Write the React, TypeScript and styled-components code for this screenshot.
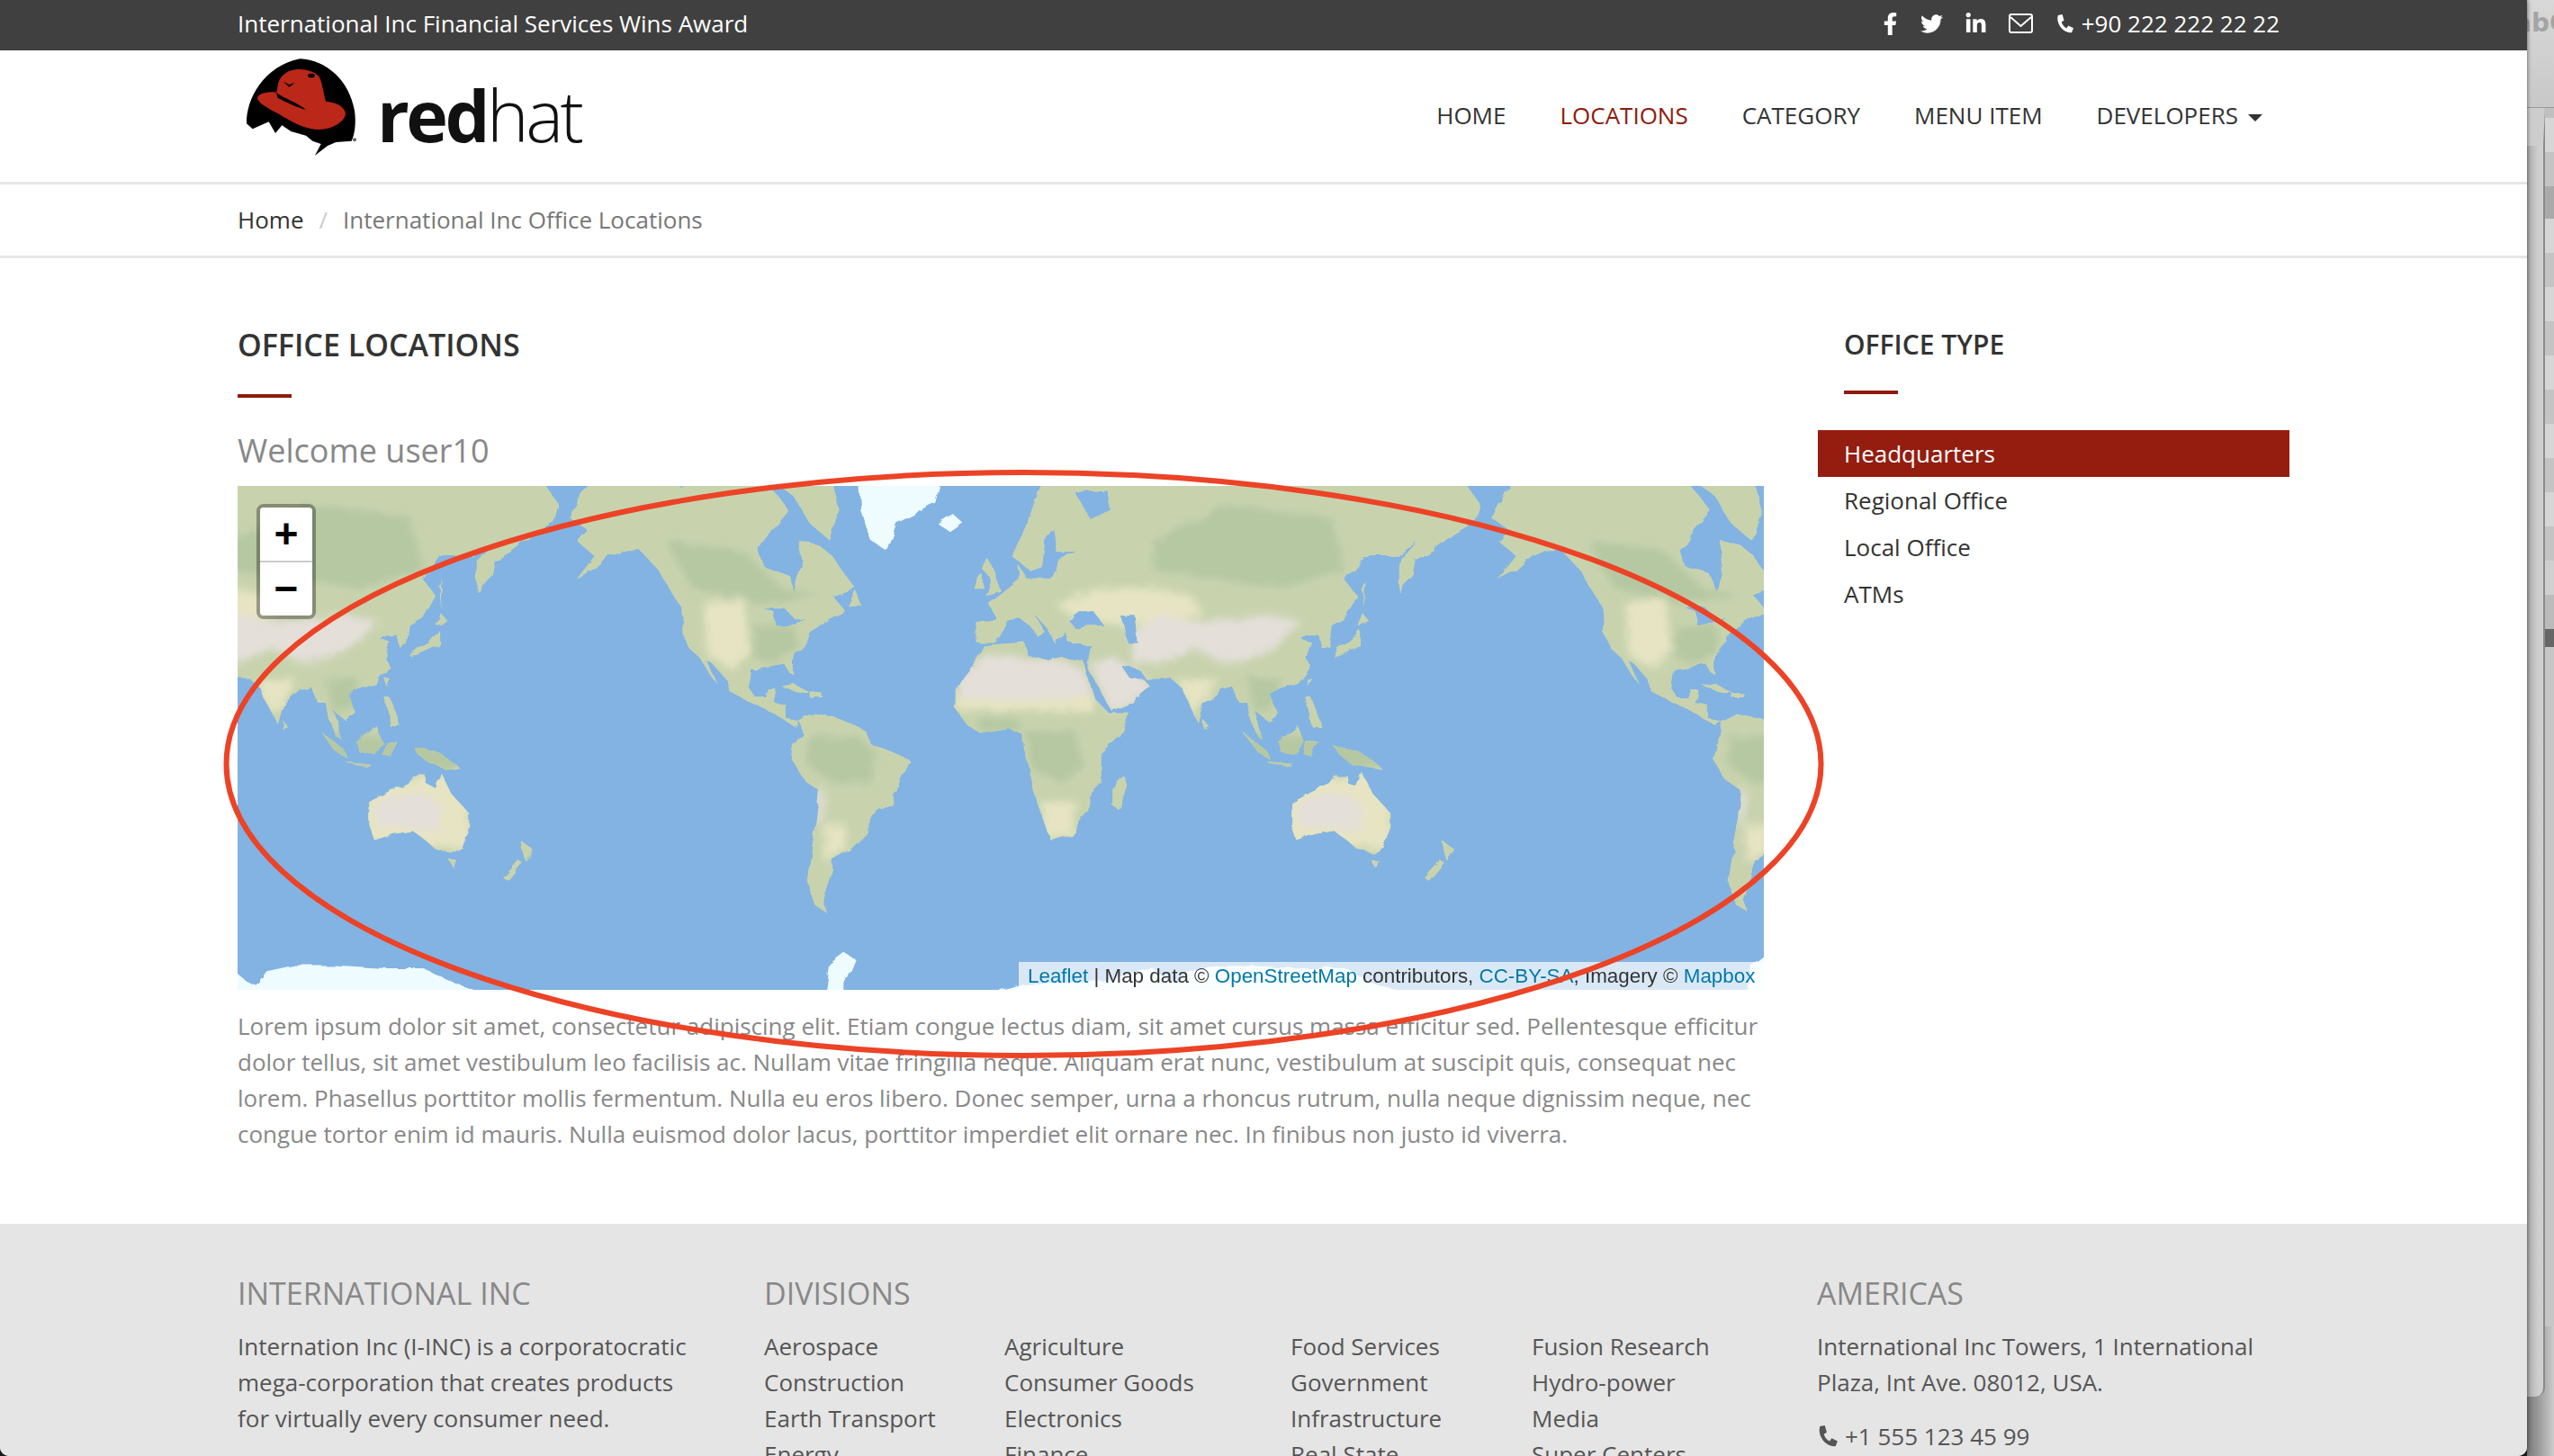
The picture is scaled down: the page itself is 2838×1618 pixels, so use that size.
import React from 'react';
import styled, { createGlobalStyle } from 'styled-components';
import { FaFacebookF, FaTwitter, FaLinkedinIn } from 'react-icons/fa';

const Global = createGlobalStyle`
  html, body { margin: 0; padding: 0; height: 1618px; overflow: hidden; background: #1d1d1d; }
  * { box-sizing: border-box; }
  body { font-family: "Open Sans", "Liberation Sans", sans-serif; font-size: 26px; line-height: 40px; color: #888; }
`;

const Screen = styled.div`display: flex; width: 2838px; height: 1618px; overflow: hidden;`;
const Window = styled.div`
  position: relative; width: 2808px; height: 1618px; flex: none; display: flex; flex-direction: column;
  background: #fff; overflow: hidden; border-radius: 0 0 10px 10px; box-shadow: 0 0 5px rgba(0,0,0,.6); z-index: 2;
`;
const TopBar = styled.div`
  height: 56px; flex: none; background: #404040; color: #fff; padding: 0 275px 4px 264px;
  display: flex; justify-content: space-between; align-items: center;
`;
const Social = styled.div`display: flex; align-items: center; gap: 24px; svg { display: block; }`;
const FacebookGlyph = styled(FaFacebookF)`margin-right: -3px;`;
const Phone = styled.span`display: flex; align-items: center; gap: 8px; margin-left: 1px;`;
const Envelope = styled.svg`width: 27px; height: 22px; flex: none;`;
const Handset = styled.svg<{ $size: number }>`width: ${p => p.$size}px; height: ${p => p.$size}px; flex: none;`;
const Header = styled.header`
  height: 149px; flex: none; border-bottom: 3px solid #e6e6e6; padding: 0 264px;
  display: flex; justify-content: space-between; align-items: center;
`;
const Logo = styled.div`display: flex; align-items: flex-start; height: 146px; margin-left: -4px;`;
const HatSvg = styled.svg`width: 150px; height: 120px; margin-top: 4px; flex: none;`;
const LogoType = styled.div`
  font-size: 79px; line-height: 100px; margin: 22px 0 0 9px; color: #111; letter-spacing: -3.5px; font-weight: 300;
  b { font-weight: 700; }
`;
const Nav = styled.nav`display: flex; padding-bottom: 2px;`;
const NavItem = styled.a<{ $active?: boolean }>`
  padding: 0 30px; color: ${p => (p.$active ? '#8f1a0e' : '#333')}; display: flex; align-items: center; gap: 11px; white-space: nowrap;
`;
const Caret = styled.i`
  display: block; width: 0; height: 0; margin-top: 6px; border-left: 8px solid transparent; border-right: 8px solid transparent; border-top: 8px solid #333;
`;
const Crumbs = styled.div`
  height: 82px; flex: none; border-bottom: 3px solid #e6e6e6; padding: 0 264px 2px; display: flex; align-items: center; gap: 17px; color: #777;
  a { color: #333; }
  span { color: #ccc; }
`;
const Main = styled.main`
  flex: none; height: 1073px; padding: 76px 264px 0; display: grid; grid-template-columns: 1696px 524px; column-gap: 60px;
`;
const Title = styled.h2`
  margin: 0; font-size: 34px; line-height: 40px; font-weight: 600; color: #333;
`;
const SideTitle = styled(Title)`font-size: 30px; padding-left: 29px;`;
const Rule = styled.div<{ $side?: boolean }>`
  width: 60px; height: 4px; background: #8f1a0e; margin: ${p => (p.$side ? '31px 0 40px 29px' : '35px 0 0')};
`;
const Welcome = styled.h3`
  margin: 31px 0 1px; font-size: 36px; line-height: 56px; font-weight: 400; color: #888; height: 66px;
`;
const MapBox = styled.div`position: relative; width: 1696px; height: 560px; background: #82b3e2; overflow: hidden;`;
const MapSvg = styled.svg`display: block; width: 1696px; height: 560px;`;
const Zoom = styled.div`
  position: absolute; left: 21px; top: 20px; width: 66px; height: 128px; border: 4px solid rgba(0,0,0,.33); border-radius: 8px;
  background-clip: padding-box; overflow: hidden;
`;
const ZoomBtn = styled.div<{ $first?: boolean }>`
  background: #fff; color: #000; display: flex; align-items: center; justify-content: center;
  font: 700 46px/56px "Liberation Mono", monospace;
  height: ${p => (p.$first ? 61 : 60)}px;
  padding-top: ${p => (p.$first ? 7 : 5)}px;
  border-bottom: ${p => (p.$first ? '2px solid #ccc' : 'none')};
`;
const Attribution = styled.div`
  position: absolute; right: 0; bottom: 0; height: 31px; width: 828px; padding: 0 10px; background: rgba(255,255,255,.7);
  font: 22.4px/31px "Liberation Sans", Arial, sans-serif; color: #333; white-space: nowrap; text-align: right;
  a { color: #0078a8; }
`;
const Lorem = styled.p`margin: 20px 0 0; color: #888; width: 1696px;`;
const SideList = styled.ul`margin: 0; padding: 0; list-style: none;`;
const SideItem = styled.li<{ $active?: boolean }>`
  height: 52px; line-height: 52px; padding-left: 29px; color: ${p => (p.$active ? '#fff' : '#333')};
  background: ${p => (p.$active ? '#941d10' : 'transparent')}; font-weight: ${p => (p.$active ? 500 : 400)};
`;
const Footer = styled.footer`
  flex: 1; background: #e5e5e5; padding: 55px 264px 0; display: grid; grid-template-columns: 585px 1170px 524px; color: #555; overflow: hidden;
`;
const FootTitle = styled.h4`margin: 0 0 17px; font-size: 34px; line-height: 44px; font-weight: 400; color: #888;`;
const Divisions = styled.div`display: grid; grid-template-columns: 267px 318px 268px 1fr;`;
const Plain = styled.div`white-space: nowrap;`;
const FootPhone = styled.div`display: flex; align-items: center; gap: 7px; margin-top: 20px;`;

const Strip = styled.div`width: 30px; height: 1618px; flex: none; position: relative; background: linear-gradient(90deg, #777, #ccc); overflow: hidden;`;
const StripHead = styled.div`
  height: 120px; background: linear-gradient(#d8d8d8, #c8c8c8); border-bottom: 1px solid #999; color: #a4a4a4;
  font: 700 28px/52px "DejaVu Sans", sans-serif; white-space: nowrap; overflow: hidden; text-indent: -14px;
`;
const StripBody = styled.div`display: flex; height: 1498px; align-items: flex-start;`;
const StripPanel = styled.div`
  width: 20px; height: 1432px; background: linear-gradient(90deg, #aaa, #cfcfcf 70%); border-right: 2px solid #8a8a8a;
  border-bottom-right-radius: 10px; border-top: 42px solid #cdcdcd;
`;
const StripRows = styled.div`width: 10px; height: 1354px; background: #c6c6c6;`;
const StripRow = styled.div<{ $tone: string; $h: number }>`height: ${p => p.$h}px; background: ${p => p.$tone};`;

const proj = ([lon, lat]: number[]) => {
  const y = 512 - (1024 / (2 * Math.PI)) * Math.log(Math.tan(Math.PI / 4 + (lat * Math.PI) / 360));
  return `${((lon + 180) / 360) * 1024},${y}`;
};
const d = (pts: number[][]) => 'M' + pts.map(proj).join('L') + 'Z';

const land: number[][][] = [
  [[-168,66],[-162,70],[-156,72],[-141,72],[-128,72],[-115,72],[-108,72],[-95,72],[-94,72],[-86,69],[-82,67],[-88,64],[-94,60],[-92,57],[-82,55],[-80,51],[-79,54],[-77,57],[-78,62],[-70,61],[-65,59],[-60,55],[-56,52],[-65,50],[-60,46],[-66,44],[-70,42],[-74,40],[-76,36],[-81,31],[-80,26],[-82,27],[-84,30],[-90,29],[-97,28],[-98,22],[-95,18],[-91,18],[-90,21],[-87,21],[-88,16],[-83,15],[-83,10],[-78,9],[-80,7],[-85,10],[-92,14],[-97,16],[-105,20],[-106,24],[-112,30],[-114,31],[-110,23],[-112,25],[-117,32],[-121,35],[-124,40],[-124,47],[-128,51],[-133,56],[-140,60],[-148,60],[-152,59],[-158,56],[-165,54],[-158,59],[-165,62],[-161,64]],
  [[-92,76],[-70,76],[-62,67],[-66,62],[-74,65],[-80,69],[-88,71],[-92,72]],
  [[-112,78],[-92,78],[-92,74.5],[-112,74.5]],
  [[-85,22],[-80,23],[-74,20],[-78,20]],
  [[-74,20],[-69,19.5],[-69,18],[-74,18]],
  [[-59,47.5],[-53,47],[-56,51.5]],
  [[-78,9],[-72,12],[-62,10],[-52,5],[-50,0],[-44,-2],[-35,-6],[-39,-15],[-41,-22],[-48,-26],[-53,-34],[-58,-38],[-65,-41],[-66,-46],[-69,-52],[-67,-55],[-72,-53],[-75,-47],[-73,-37],[-71,-28],[-70,-18],[-76,-14],[-81,-6],[-80,0],[-77,4]],
  [[-6,36],[10,37],[11,33],[20,31],[25,32],[33,31],[35,24],[37,18],[43,12],[51,12],[47,3],[40,-4],[40,-15],[35,-20],[35,-25],[28,-33],[20,-35],[18,-30],[14,-20],[12,-10],[9,-1],[9,4],[4,6],[-7,4],[-13,8],[-17,14],[-17,21],[-10,29]],
  [[49,-12],[50,-16],[47,-25],[44,-23],[44,-17]],
  [[-9,37],[-9,43],[-1,44],[-4,48],[2,51],[8,54],[8,57],[11,54],[20,54],[24,59],[30,60],[22,60],[21,64],[24,66],[18,62],[17,57],[12,56],[5,59],[10,64],[18,72],[28,73],[40,73],[55,73],[68,73],[73,73],[80,74],[100,76],[113,74],[130,73],[150,73],[170,73],[180,72],[188,68],[186,65],[178,63],[170,60],[163,58],[162,55],[156,51],[156,58],[163,62],[155,59],[142,59],[135,54],[140,50],[135,44],[130,42],[129,36],[126,35],[125,39],[121,39],[118,38],[122,37],[120,32],[122,29],[117,23],[110,21],[106,19],[109,12],[105,9],[100,13],[103,2],[101,3],[98,10],[97,16],[94,16],[91,22],[87,21],[80,15],[78,8],[73,18],[72,21],[67,25],[57,25],[56,27],[50,30],[48,29],[51,25],[56,25],[59,22],[52,16],[44,13],[39,21],[35,28],[35,32],[36,36],[30,36],[27,37],[26,40],[23,38],[22,36.5],[19,41],[14,45],[18,40],[16,38],[12,42],[8,44],[3,43],[0,39],[-2,37]],
  [[-5,50],[1,51],[-2,56],[-4,58.5],[-6,56],[-3,54]],
  [[-10,52],[-6,52],[-6,55],[-9,54]],
  [[130,32],[136,34],[141,36],[141,41],[137,37],[132,35]],
  [[140,42],[145,43],[142,45.5]],
  [[142,46],[143,54],[142,52]],
  [[120,18],[122,18],[124,13],[126,7],[122,7],[121,13]],
  [[109,1],[117,7],[119,1],[116,-4],[110,-3]],
  [[95,5],[104,-2],[106,-6],[101,-3]],
  [[105,-7],[115,-8],[114,-8.8],[106,-7.8]],
  [[120,1],[125,1],[122,-5],[119,-4]],
  [[131,-1],[141,-3],[148,-8],[150,-10],[143,-9],[138,-8],[133,-4]],
  [[120,25],[122,25],[120.5,22]],
  [[80,9.5],[82,7],[80,6]],
  [[114,-22],[122,-18],[129,-15],[131,-12],[136,-12],[136,-15],[140,-17],[142,-11],[146,-19],[153,-26],[153,-31],[150,-37],[146,-39],[140,-38],[136,-35],[131,-32],[124,-33],[116,-35],[114,-30]],
  [[145,-41],[148,-41],[147,-43.5]],
  [[173,-35],[178,-38],[175,-41.5],[174,-39]],
  [[172,-41],[174,-42],[168,-47],[166,-46]],
];
const ice: number[][][] = [
  [[-22,72],[-25,68],[-40,65],[-44,60],[-50,62],[-54,67],[-55,72],[-60,76],[-40,80],[-22,78]],
  [[-24,65],[-18,66.5],[-14,65],[-19,63.5]],
  [[-10,-70],[10,-68],[40,-67.5],[55,-66],[60,-65.5],[66,-67.5],[70,-68],[74,-66],[85,-65],[100,-65],[120,-65.5],[135,-65.5],[145,-67.5],[165,-70],[170,-72],[165,-80],[-10,-80]],
  [[-68,-80],[-68,-70],[-66,-65],[-60,-63],[-56,-64],[-60,-68],[-60,-80]],
];
const seas: number[][][] = [
  [[28,43],[31,46],[37,46],[41,42],[35,42],[30,41]],
  [[47,45],[53,45],[54,37],[50,37],[49,41]],
  [[-92,47],[-84,47],[-80,44],[-76,44],[-83,42],[-87,42],[-88,46]],
  [[-125,72],[-118,73.5],[-118,71],[-125,70.5]],
  [[-100,74.2],[-88,74.2],[-88,72.8],[-100,72.8]],
  [[30,69.5],[42,70],[44,67],[36,65.5]],
];
const zones: { c: string; p: number[][][] }[] = [
  { c: '#b5c8a2', p: [
    [[60,62],[90,68],[130,66],[135,56],[110,52],[85,54],[60,56]],
    [[-75,3],[-55,3],[-48,-3],[-50,-15],[-65,-15],[-75,-8]],
    [[10,5],[30,5],[33,-8],[25,-15],[13,-10]],
    [[-130,62],[-100,60],[-85,52],[-70,50],[-95,48],[-120,52]],
    [[-95,42],[-80,42],[-78,35],[-88,30],[-96,32]],
    [[97,25],[110,25],[108,14],[100,12]],
    [[-8,10],[8,10],[8,5],[-8,5]],
    [[95,5],[150,0],[150,-10],[100,-8]],
  ] },
  { c: '#e6e4c2', p: [
    [[22,48],[40,52],[60,52],[75,50],[80,45],[50,42],[30,44]],
    [[-115,48],[-100,50],[-97,35],[-104,28],[-114,33]],
    [[-68,-30],[-60,-30],[-60,-38],[-68,-42]],
    [[112,-15],[152,-10],[154,-38],[112,-36]],
    [[70,24],[85,25],[80,15],[75,12]],
    [[-17,19],[37,19],[37,13],[-17,13]],
    [[17,-22],[30,-22],[28,-34],[17,-34]],
  ] },
  { c: '#e4dfd9', p: [
    [[-16,25],[-5,33],[10,32],[25,31],[33,28],[36,20],[32,18],[15,17],[-16,18]],
    [[36,30],[45,32],[56,26],[60,20],[50,15],[44,12],[39,22]],
    [[52,40],[62,45],[80,43],[105,45],[118,43],[108,36],[100,32],[88,30],[76,35],[62,30],[52,30]],
    [[120,-20],[135,-19],[142,-23],[142,-32],[128,-31],[118,-31],[116,-25]],
    [[-71,-18],[-68,-18],[-69,-30],[-71,-30]],
  ] },
];

const landPath = land.map(d).join('');
const World = () => (
  <g id="world">
    <path d={landPath} fill="#c8d3ae" />
    <g clipPath="url(#landClip)">
      <g filter="url(#soft)">
        {zones.map(z => <path key={z.c} d={z.p.map(d).join('')} fill={z.c} />)}
      </g>
    </g>
    <path d={seas.map(d).join('')} fill="#82b3e2" />
    <path d={ice.map(d).join('')} fill="#eefcff" />
  </g>
);

const WorldMap = () => (
  <MapSvg viewBox="0 0 1696 560">
    <defs>
      <clipPath id="landClip"><path d={landPath} /></clipPath>
      <filter id="soft" x="-5%" y="-5%" width="110%" height="110%"><feGaussianBlur stdDeviation="4" /></filter>
      <filter id="rough" x="0" y="0" width="100%" height="100%">
        <feTurbulence type="fractalNoise" baseFrequency="0.05" numOctaves="3" seed="4" />
        <feDisplacementMap in="SourceGraphic" scale="8" />
      </filter>
    </defs>
    <rect width="1696" height="560" fill="#82b3e2" />
    <g filter="url(#rough)">
      <g transform="translate(-690 -225)"><World /></g>
      <g transform="translate(334 -225)"><use href="#world" /></g>
      <g transform="translate(1358 -225)"><use href="#world" /></g>
    </g>
  </MapSvg>
);

const Hat = () => (
  <HatSvg viewBox="0 0 450 360">
    <path fill="#000" d="M42 232C40 150 100 40 220 16C310 20 385 90 402 190C408 230 402 270 392 290L340 294L312 306L270 338L290 300L262 290L240 272L190 258L160 238L138 264L116 226L62 250Z" />
    <path fill="#bb2718" d="M146 104C150 78 172 56 205 52C232 48 270 58 284 76C296 100 298 130 306 158C336 160 368 172 372 198C370 226 330 250 284 252C240 252 190 226 150 200C115 182 78 162 78 146C82 130 118 124 140 128C146 120 144 112 146 104Z" />
    <path fill="#000" d="M140 128C170 150 210 160 240 186C212 178 172 160 146 146Z" />
    <path fill="#000" d="M164 92L184 102L204 96L184 110Z" />
    <ellipse cx="258" cy="72" rx="12" ry="7" fill="#000" />
    <circle cx="402" cy="286" r="6" fill="#666" />
  </HatSvg>
);

const PhoneIcon = ({ size }: { size: number }) => (
  <Handset $size={size} viewBox="0 0 22 22">
    <path fill="currentColor" d="M3 1L8 0L10 7L7 9C8 12 10 15 13 16L15 13L21 16L19 21C10 23 0 11 3 1Z" />
  </Handset>
);

const rows: [string, number][] = [['#c0c0c0', 11], ['#d6d6d6', 38], ['#c4c4c4', 38], ['#aaa', 36], ['#d6d6d6', 38], ['#c4c4c4', 38], ['#d6d6d6', 38], ['#c4c4c4', 38], ['#d6d6d6', 38], ['#c4c4c4', 38], ['#d6d6d6', 38], ['#c4c4c4', 38], ['#d6d6d6', 38], ['#c4c4c4', 38], ['#d0d0d0', 38], ['#bbb', 38], ['#666', 20]];

const divisions = [
  ['Aerospace', 'Agriculture', 'Food Services', 'Fusion Research'],
  ['Construction', 'Consumer Goods', 'Government', 'Hydro-power'],
  ['Earth Transport', 'Electronics', 'Infrastructure', 'Media'],
  ['Energy', 'Finance', 'Real State', 'Super Centers'],
];

const Annotation = styled.svg`position: absolute; left: 240px; top: 510px; width: 1800px; height: 680px; pointer-events: none;`;

export default function App() {
  return (
    <Screen>
      <Global />
      <Window>
        <TopBar>
          <span>International Inc Financial Services Wins Award</span>
          <Social>
            <FacebookGlyph size={25} />
            <FaTwitter size={25} />
            <FaLinkedinIn size={25} />
            <Envelope viewBox="0 0 27 22">
              <rect x="1" y="1" width="25" height="20" rx="2" fill="none" stroke="#fff" strokeWidth="2" />
              <path d="M2 4L13.5 14L25 4" fill="none" stroke="#fff" strokeWidth="2" />
            </Envelope>
            <Phone><PhoneIcon size={21} />+90 222 222 22 22</Phone>
          </Social>
        </TopBar>
        <Header>
          <Logo>
            <Hat />
            <LogoType><b>red</b>hat</LogoType>
          </Logo>
          <Nav>
            <NavItem>HOME</NavItem>
            <NavItem $active>LOCATIONS</NavItem>
            <NavItem>CATEGORY</NavItem>
            <NavItem>MENU ITEM</NavItem>
            <NavItem>DEVELOPERS <Caret /></NavItem>
          </Nav>
        </Header>
        <Crumbs>
          <a>Home</a><span>/</span>International Inc Office Locations
        </Crumbs>
        <Main>
          <section>
            <Title>OFFICE LOCATIONS</Title>
            <Rule />
            <Welcome>Welcome user10</Welcome>
            <MapBox>
              <WorldMap />
              <Zoom>
                <ZoomBtn $first>+</ZoomBtn>
                <ZoomBtn>−</ZoomBtn>
              </Zoom>
              <Attribution>
                <a>Leaflet</a> | Map data © <a>OpenStreetMap</a> contributors, <a>CC-BY-SA</a>, Imagery © <a>Mapbox</a>
              </Attribution>
            </MapBox>
            <Lorem>
              Lorem ipsum dolor sit amet, consectetur adipiscing elit. Etiam congue lectus diam, sit amet cursus massa efficitur sed. Pellentesque efficitur dolor tellus, sit amet vestibulum leo facilisis ac. Nullam vitae fringilla neque. Aliquam erat nunc, vestibulum at suscipit quis, consequat nec lorem. Phasellus porttitor mollis fermentum. Nulla eu eros libero. Donec semper, urna a rhoncus rutrum, nulla neque dignissim neque, nec congue tortor enim id mauris. Nulla euismod dolor lacus, porttitor imperdiet elit ornare nec. In finibus non justo id viverra.
            </Lorem>
          </section>
          <aside>
            <SideTitle>OFFICE TYPE</SideTitle>
            <Rule $side />
            <SideList>
              <SideItem $active>Headquarters</SideItem>
              <SideItem>Regional Office</SideItem>
              <SideItem>Local Office</SideItem>
              <SideItem>ATMs</SideItem>
            </SideList>
          </aside>
        </Main>
        <Footer>
          <div>
            <FootTitle>INTERNATIONAL INC</FootTitle>
            Internation Inc (I-INC) is a corporatocratic<br />
            mega-corporation that creates products<br />
            for virtually every consumer need.
          </div>
          <div>
            <FootTitle>DIVISIONS</FootTitle>
            <Divisions>
              {divisions.flat().map(name => <Plain key={name}>{name}</Plain>)}
            </Divisions>
          </div>
          <div>
            <FootTitle>AMERICAS</FootTitle>
            International Inc Towers, 1 International<br />
            Plaza, Int Ave. 08012, USA.
            <FootPhone><PhoneIcon size={24} />+1 555 123 45 99</FootPhone>
          </div>
        </Footer>
        <Annotation viewBox="0 0 1800 680">
          <ellipse cx="897.5" cy="339" rx="886" ry="324" fill="none" stroke="#ec4326" strokeWidth="6" />
        </Annotation>
      </Window>
      <Strip>
        <StripHead>abC</StripHead>
        <StripBody>
          <StripPanel />
          <StripRows>
            {rows.map(([tone, h], i) => <StripRow key={i} $tone={tone} $h={h} />)}
          </StripRows>
        </StripBody>
      </Strip>
    </Screen>
  );
}
